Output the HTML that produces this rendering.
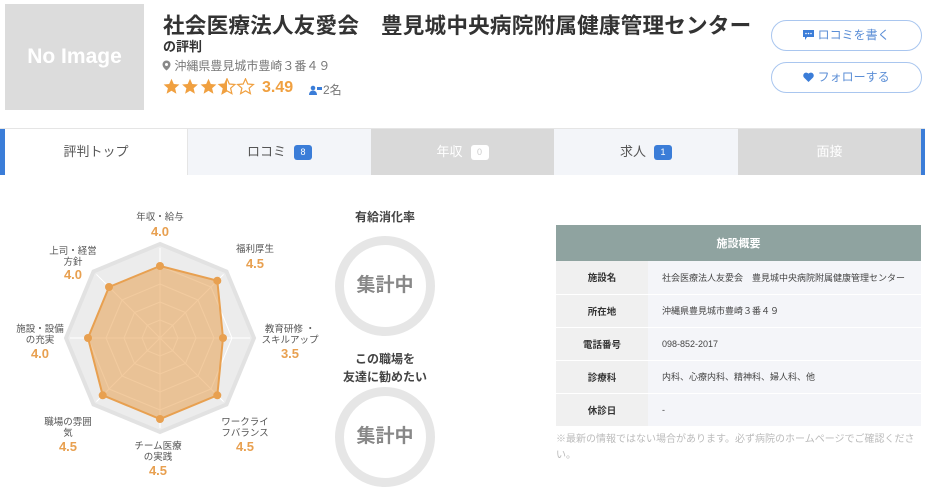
<!DOCTYPE html>
<html><head><meta charset="utf-8"><style>
*{margin:0;padding:0;box-sizing:border-box}
body{width:925px;height:484px;overflow:hidden;background:#fff;font-family:"Liberation Sans","Noto Sans CJK JP",sans-serif;color:#333;position:relative}
.abs{position:absolute}
.noimg{left:5px;top:4px;width:139px;height:106px;background:#dcdcdc;color:#fff;font-size:21px;font-weight:bold;text-align:center;line-height:106px}
h1{left:163px;top:9px;font-size:21.6px;font-weight:bold;color:#333;white-space:nowrap;letter-spacing:0.2px}
.sub{left:163px;top:36px;font-size:13px;font-weight:bold}
.addr{left:162px;top:57px;font-size:12px;color:#777}
.stars{left:163px;top:78px}
.score{left:262px;top:79px;font-size:16px;font-weight:bold;color:#f0a040}
.cnt{left:309px;top:81px;font-size:12px;color:#777}
.btn{left:771px;width:151px;height:31px;border:1px solid #a9c6ef;border-radius:16px;font-size:12px;color:#5b8ed6;text-align:center;line-height:29px}
.tabs{left:0;top:128px;width:925px;height:47px;border-top:1px solid #e5e5e5;border-bottom:1px solid #e5e5e5}
.tab{position:absolute;top:0;height:46px;text-align:center;line-height:46px;font-size:13px;color:#555}
.badge{display:inline-block;min-width:18px;height:15px;line-height:15px;border-radius:3px;font-size:9px;color:#fff;background:#3b7dd8;margin-left:8px;vertical-align:1px;padding:0 5px}
.ring{width:100px;height:100px;border:9px solid #e6e6e6;border-radius:50%;text-align:center;line-height:82px;font-size:19px;color:#888;font-weight:bold}
.t{font-size:12px;font-weight:bold;color:#444;text-align:center}
table{position:absolute;left:556px;top:225px;width:365px;border-collapse:collapse;font-size:9px}
th{background:#8fa3a0;color:#fff;height:36px;font-size:11px}
td{height:33px;border-bottom:1px solid #fff}
td.l{background:#f0f0f0;width:92px;text-align:center;font-weight:bold;font-size:9.5px}
td.v{background:#f4f5f9;padding-left:14px;color:#444}
.note{left:556px;top:432px;width:365px;font-size:10px;color:#bbb;line-height:16px}
</style></head><body>
<div class="abs noimg">No Image</div>
<h1 class="abs">社会医療法人友愛会　豊見城中央病院附属健康管理センター</h1>
<div class="abs sub">の評判</div>
<div class="abs addr"><svg width="9" height="11" viewBox="0 0 9 11" style="vertical-align:-1px"><path d="M4.5 0.5a4 4 0 0 0-4 4c0 3 4 6 4 6s4-3 4-6a4 4 0 0 0-4-4z" fill="#888"/><circle cx="4.5" cy="4.5" r="1.5" fill="#fff"/></svg> 沖縄県豊見城市豊崎３番４９</div>
<svg class="abs stars" width="92" height="18" viewBox="0 0 92 18">
<defs><path id="s" d="M8.5 0.8l2.3 5.2 5.6.5-4.3 3.7 1.3 5.5-4.9-2.9-4.9 2.9 1.3-5.5L.6 6.5l5.6-.5z"/>
<clipPath id="h"><rect x="0" y="0" width="8.5" height="18"/></clipPath></defs>
<use href="#s" fill="#f0a040"/>
<use href="#s" x="18.5" fill="#f0a040"/>
<use href="#s" x="37" fill="#f0a040"/>
<g transform="translate(55.5,0)"><use href="#s" fill="none" stroke="#f0a040" stroke-width="1.2"/><use href="#s" fill="#f0a040" clip-path="url(#h)"/></g>
<use href="#s" x="74" fill="none" stroke="#f0a040" stroke-width="1.2"/>
</svg>
<div class="abs score">3.49</div>
<div class="abs cnt"><svg width="14" height="10" viewBox="0 0 14 10" style="vertical-align:-1px"><circle cx="4" cy="3" r="2.3" fill="#3b7dd8"/><path d="M0 10c0-3 2-4.5 4-4.5s4 1.5 4 4.5z" fill="#3b7dd8"/><rect x="8" y="2" width="5" height="3" fill="#3b7dd8"/></svg>2名</div>
<div class="abs btn" style="top:20px"><svg width="11" height="10" viewBox="0 0 11 10" style="vertical-align:-1px"><path d="M0 0h11v7H4l-2 3V7H0z" fill="#3b7dd8"/><circle cx="3" cy="3.5" r=".8" fill="#fff"/><circle cx="5.5" cy="3.5" r=".8" fill="#fff"/><circle cx="8" cy="3.5" r=".8" fill="#fff"/></svg> ロコミを書く</div>
<div class="abs btn" style="top:62px"><svg width="11" height="10" viewBox="0 0 12 11" style="vertical-align:-1px"><path d="M6 11L1 6A3 3 0 0 1 6 1.8 3 3 0 0 1 11 6z" fill="#3b7dd8"/></svg> フォローする</div>
<div class="abs tabs">
<div class="tab" style="left:0;width:5px;background:#3b7dd8"></div>
<div class="tab" style="left:5px;width:182px;background:#fff">評判トップ</div>
<div class="tab" style="left:187px;width:184px;background:#f3f5f9;border-left:1px solid #e5e5e5">ロコミ<span class="badge">8</span></div>
<div class="tab" style="left:371px;width:183px;background:#d9d9d9;color:#fff">年収<span class="badge" style="background:#fff;color:#ccc">0</span></div>
<div class="tab" style="left:554px;width:184px;background:#f3f5f9">求人<span class="badge">1</span></div>
<div class="tab" style="left:738px;width:183px;background:#d9d9d9;color:#fff">面接</div>
<div class="tab" style="left:921px;width:4px;background:#3b7dd8"></div>
</div>
<svg class="abs" style="left:0;top:190px" width="340" height="294" viewBox="0 190 340 294">
<polygon points="160,244 226.5,271.5 254,338 226.5,404.5 160,432 93.5,404.5 66,338 93.5,271.5" fill="#ececec" stroke="#e2e2e2" stroke-width="4"/>
<g fill="none" stroke="#fff" stroke-width="1">
<polygon points="160,266 211,287 232,338 211,389 160,410 109,389 88,338 109,287"/>
<polygon points="160,284 198,300 214,338 198,376 160,392 122,376 106,338 122,300"/>
<polygon points="160,302 185.5,312.5 196,338 185.5,363.5 160,374 134.5,363.5 124,338 134.5,312.5"/>
<polygon points="160,320 172.7,325.3 178,338 172.7,350.7 160,356 147.3,350.7 142,338 147.3,325.3"/>
<path d="M160 338L160 248M160 338L223.6 274.4M160 338L250 338M160 338L223.6 401.6M160 338L160 428M160 338L96.4 401.6M160 338L70 338M160 338L96.4 274.4"/>
</g>
<polygon points="160,266 217.3,280.7 223,338 217.3,395.3 160,419 102.7,395.3 88,338 109,287" fill="rgba(232,160,80,0.55)" stroke="#e8a050" stroke-width="2"/>
<g fill="#e8a050"><circle cx="160" cy="266" r="4"/><circle cx="217.3" cy="280.7" r="4"/><circle cx="223" cy="338" r="4"/><circle cx="217.3" cy="395.3" r="4"/><circle cx="160" cy="419" r="4"/><circle cx="102.7" cy="395.3" r="4"/><circle cx="88" cy="338" r="4"/><circle cx="109" cy="287" r="4"/></g>
<g font-size="9.5" fill="#555" text-anchor="middle">
<text x="160" y="220">年収・給与</text>
<text x="255" y="252">福利厚生</text>
<text x="290" y="332">教育研修 ・</text><text x="290" y="343">スキルアップ</text>
<text x="245" y="425">ワークライ</text><text x="245" y="436">フバランス</text>
<text x="158" y="449">チーム医療</text><text x="158" y="460">の実践</text>
<text x="68" y="425">職場の雰囲</text><text x="68" y="436">気</text>
<text x="40" y="332">施設・設備</text><text x="40" y="343">の充実</text>
<text x="73" y="254">上司・経営</text><text x="73" y="265">方針</text>
</g>
<g font-size="13" fill="#e8a050" text-anchor="middle" font-weight="bold">
<text x="160" y="236">4.0</text><text x="255" y="268">4.5</text><text x="290" y="358">3.5</text><text x="245" y="451">4.5</text><text x="158" y="475">4.5</text><text x="68" y="451">4.5</text><text x="40" y="358">4.0</text><text x="73" y="279">4.0</text>
</g>
</svg>
<div class="abs t" style="left:335px;top:208px;width:100px">有給消化率</div>
<div class="abs ring" style="left:335px;top:236px">集計中</div>
<div class="abs t" style="left:325px;top:350px;width:120px;line-height:18px">この職場を<br>友達に勧めたい</div>
<div class="abs ring" style="left:335px;top:387px">集計中</div>
<table>
<tr><th colspan="2">施設概要</th></tr>
<tr><td class="l">施設名</td><td class="v">社会医療法人友愛会　豊見城中央病院附属健康管理センター</td></tr>
<tr><td class="l">所在地</td><td class="v">沖縄県豊見城市豊崎３番４９</td></tr>
<tr><td class="l">電話番号</td><td class="v">098-852-2017</td></tr>
<tr><td class="l">診療科</td><td class="v">内科、心療内科、精神科、婦人科、他</td></tr>
<tr><td class="l">休診日</td><td class="v">-</td></tr>
</table>
<div class="abs note">※最新の情報ではない場合があります。必ず病院のホームページでご確認ください。</div>
</body></html>
